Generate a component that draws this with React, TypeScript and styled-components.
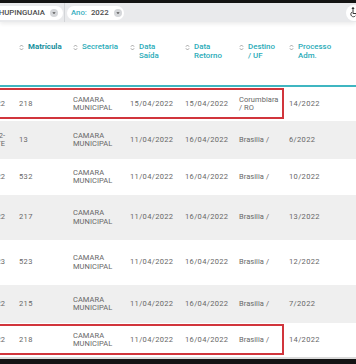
import React from "react";
import styled, { createGlobalStyle, css } from "styled-components";

const Global = createGlobalStyle`
  html, body { margin: 0; padding: 0; background: #fff; }
  body { font-family: Roboto, "Liberation Sans", sans-serif; width: 356px; height: 364px; overflow: hidden; }
  #root { width: 356px; height: 364px; }
`;

const COLS = "19px 54px 57px 55px 54px 50px 56px 1fr";

const Page = styled.div`
  width: 356px;
  height: 364px;
  display: flex;
  flex-direction: column;
  overflow: hidden;
  background: #fff;
`;

const TopEdge = styled.div`
  flex: none;
  height: 3px;
  background: #141414;
`;

const FilterBar = styled.div`
  flex: none;
  height: 19px;
  background: #e9eaec;
  display: flex;
  align-items: center;
  box-shadow: 0 2px 4px rgba(0, 0, 0, 0.08);
  position: relative;
  z-index: 1;
`;

const Pill = styled.div<{ $clipped?: boolean; $width: number }>`
  flex: none;
  height: 14px;
  width: ${(p) => p.$width}px;
  box-sizing: border-box;
  background: #fff;
  border-radius: ${(p) => (p.$clipped ? "0 7px 7px 0" : "7px")};
  display: flex;
  align-items: center;
  justify-content: ${(p) => (p.$clipped ? "flex-end" : "flex-start")};
  gap: 4px;
  padding: ${(p) => (p.$clipped ? "0 5px 0 0" : "0 3px 0 4px")};
  overflow: hidden;
  font-size: 7.8px;
  font-weight: 500;
  white-space: nowrap;
  color: #4c4c4c;
`;

const PillText = styled.span`
  flex: none;
`;

const PillLabel = styled.span`
  flex: none;
  color: #3aafbf;
`;

const CaretSvg = styled.svg`
  flex: none;
  display: block;
  margin-left: 1px;
`;

const Divider = styled.div`
  flex: none;
  width: 1px;
  align-self: stretch;
  background: #d3d5d8;
  margin: 0 2px 0 1px;
`;

const Spacer = styled.div`
  flex: 1;
`;

const A11yButton = styled.div`
  flex: none;
  width: 16px;
  height: 16px;
  border-radius: 50%;
  background: #fff;
  margin-right: -6px;
  display: flex;
  align-items: center;
  padding-left: 4px;
  box-sizing: border-box;
`;

const Table = styled.div`
  flex: none;
  display: flex;
  flex-direction: column;
`;

const HeaderRow = styled.div`
  display: grid;
  grid-template-columns: ${COLS};
  height: 65px;
  box-sizing: border-box;
  padding-top: 21px;
  border-bottom: 2px solid #3fb6c1;
  align-items: start;
`;

const HeadCell = styled.div<{ $active?: boolean }>`
  display: flex;
  align-items: flex-start;
  gap: 4px;
  color: ${(p) => (p.$active ? "#178f9d" : "#2aabb8")};
  font-weight: ${(p) => (p.$active ? 700 : 500)};
  font-size: 7.9px;
  line-height: 8.5px;
  white-space: pre-line;
`;

const SortIcon = styled.svg`
  flex: none;
  margin-top: 1px;
`;

const BodyRow = styled.div<{ $h: number; $shade?: boolean; $mark?: boolean }>`
  display: grid;
  grid-template-columns: ${COLS};
  height: ${(p) => p.$h}px;
  align-items: center;
  background: ${(p) => (p.$shade ? "#efefef" : "#fff")};
  position: relative;
  ${(p) =>
    p.$mark &&
    css`
      &::after {
        content: "";
        position: absolute;
        left: -2px;
        top: 1px;
        bottom: 2px;
        width: 286px;
        border: 2px solid #d1353c;
        box-sizing: border-box;
        pointer-events: none;
      }
    `}
`;

const Cell = styled.div<{ $numeric?: boolean }>`
  font-size: 7.5px;
  line-height: 8.5px;
  color: #676767;
  letter-spacing: ${(p) => (p.$numeric ? "0.35px" : "0.05px")};
  white-space: pre-line;
`;

const LeadCell = styled.div`
  display: flex;
  flex-direction: column;
  align-items: flex-end;
  overflow: hidden;
  padding-right: 14px;
  font-size: 7.5px;
  line-height: 8.5px;
  color: #676767;
  white-space: nowrap;
`;

const BottomLine = styled.div`
  flex: none;
  height: 2px;
  background: #dadada;
`;

const BottomEdge = styled.div`
  flex: 1;
  background: #141414;
`;

const Caret = () => (
  <CaretSvg width="8" height="8" viewBox="0 0 8 8">
    <circle cx="4" cy="4" r="4" fill="#d5d7da" />
    <path d="M2.4 3.2 L5.6 3.2 L4 5.2 Z" fill="#555" />
  </CaretSvg>
);

const Sort = () => (
  <SortIcon width="5" height="7" viewBox="0 0 5 7">
    <path d="M0.9 2.7 L2.5 1 L4.1 2.7 M0.9 4.3 L2.5 6 L4.1 4.3" fill="none" stroke="#9b9b9b" strokeWidth="0.9" />
  </SortIcon>
);

const A11yIcon = () => (
  <svg width="9" height="11" viewBox="0 0 9 11">
    <circle cx="3" cy="1.4" r="1.2" fill="#333" />
    <path d="M3 3 L3 6.5 L6 6.5 L7 9" fill="none" stroke="#333" strokeWidth="1" />
    <path d="M2 5 A2.6 2.6 0 1 0 5.6 8.6" fill="none" stroke="#333" strokeWidth="0.9" />
  </svg>
);

const headers: { text: string; active?: boolean }[] = [
  { text: "Matrícula", active: true },
  { text: "Secretaria" },
  { text: "Data\nSaída" },
  { text: "Data\nRetorno" },
  { text: "Destino\n/ UF" },
  { text: "Processo\nAdm." },
];

type Row = {
  lead: string[];
  mat: string;
  sec: string;
  saida: string;
  retorno: string;
  destino: string;
  proc: string;
  h: number;
  mark?: boolean;
};

const rows: Row[] = [
  { lead: ["2022"], mat: "218", sec: "CAMARA\nMUNICIPAL", saida: "15/04/2022", retorno: "15/04/2022", destino: "Corumbiara\n/ RO", proc: "14/2022", h: 34, mark: true },
  { lead: ["2022-", "CONVITE"], mat: "13", sec: "CAMARA\nMUNICIPAL", saida: "11/04/2022", retorno: "16/04/2022", destino: "Brasilia /", proc: "6/2022", h: 38 },
  { lead: ["2022"], mat: "532", sec: "CAMARA\nMUNICIPAL", saida: "11/04/2022", retorno: "16/04/2022", destino: "Brasilia /", proc: "10/2022", h: 36 },
  { lead: ["2022"], mat: "217", sec: "CAMARA\nMUNICIPAL", saida: "11/04/2022", retorno: "16/04/2022", destino: "Brasilia /", proc: "13/2022", h: 45 },
  { lead: ["2023"], mat: "523", sec: "CAMARA\nMUNICIPAL", saida: "11/04/2022", retorno: "16/04/2022", destino: "Brasilia /", proc: "12/2022", h: 45 },
  { lead: ["2022"], mat: "215", sec: "CAMARA\nMUNICIPAL", saida: "11/04/2022", retorno: "16/04/2022", destino: "Brasilia /", proc: "7/2022", h: 38 },
  { lead: ["2022"], mat: "218", sec: "CAMARA\nMUNICIPAL", saida: "11/04/2022", retorno: "16/04/2022", destino: "Brasilia /", proc: "14/2022", h: 34, mark: true },
];

export default function App() {
  return (
    <Page>
      <Global />
      <TopEdge />
      <FilterBar>
        <Pill $clipped $width={63}>
          <PillText>CHUPINGUAIA</PillText>
          <Caret />
        </Pill>
        <Divider />
        <Pill $width={57}>
          <PillLabel>Ano:</PillLabel>
          <PillText>2022</PillText>
          <Caret />
        </Pill>
        <Spacer />
        <A11yButton>
          <A11yIcon />
        </A11yButton>
      </FilterBar>
      <Table>
        <HeaderRow>
          <div />
          {headers.map((h) => (
            <HeadCell key={h.text} $active={h.active}>
              <Sort />
              <span>{h.text}</span>
            </HeadCell>
          ))}
          <div />
        </HeaderRow>
        {rows.map((r, i) => (
          <BodyRow key={i} $h={r.h} $shade={i % 2 === 1} $mark={r.mark}>
            <LeadCell>
              {r.lead.map((l) => (
                <span key={l}>{l}</span>
              ))}
            </LeadCell>
            <Cell $numeric>{r.mat}</Cell>
            <Cell>{r.sec}</Cell>
            <Cell $numeric>{r.saida}</Cell>
            <Cell $numeric>{r.retorno}</Cell>
            <Cell>{r.destino}</Cell>
            <Cell $numeric>{r.proc}</Cell>
            <div />
          </BodyRow>
        ))}
      </Table>
      <BottomLine />
      <BottomEdge />
    </Page>
  );
}
